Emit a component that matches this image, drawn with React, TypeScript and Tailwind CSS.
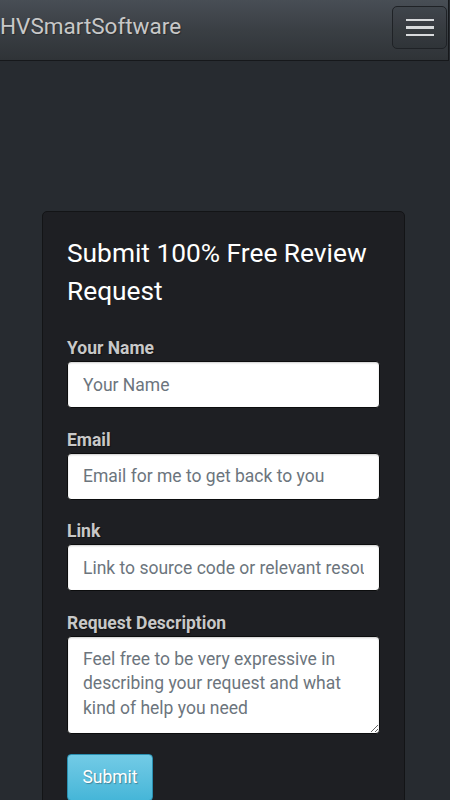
import * as React from "react";

const fields = [
  { label: "Your Name", placeholder: "Your Name" },
  { label: "Email", placeholder: "Email for me to get back to you" },
  { label: "Link", placeholder: "Link to source code or relevant resources" },
];

export default function App() {
  return (
    <div className="min-h-[800px] bg-[#272b30] font-['Roboto',sans-serif] overflow-hidden">
      {/* Navbar */}
      <nav className="w-[449px] h-[61px] flex items-start justify-between border-r border-b border-[#16181b] bg-gradient-to-b from-[#484e55] via-[#3a3f44] to-[#2f3337]">
        <a className="mt-[11px] text-[22.5px] leading-[30px] text-[#c8c8c8] [text-shadow:1px_1px_1px_rgba(0,0,0,0.3)]">
          HVSmartSoftware
        </a>
        <button className="mt-[6px] mr-[1px] w-[55px] h-[43px] rounded-[5px] border border-[#1f2226] bg-[#00000010] flex flex-col items-center justify-center gap-[5px]">
          <span className="block w-[28px] h-[2.5px] bg-[#d8dadc]" />
          <span className="block w-[28px] h-[2.5px] bg-[#d8dadc]" />
          <span className="block w-[28px] h-[2.5px] bg-[#d8dadc]" />
        </button>
      </nav>

      {/* Card */}
      <div className="ml-[42px] mt-[150px] w-[363px] rounded-[5px] border border-[#131416] bg-[#1e1f23] px-[24px] pt-[22px] pb-[30px]">
        <h3 className="text-[26.3px] leading-[38px] text-white font-normal">
          Submit 100% Free Review Request
        </h3>
        <form className="mt-[26px]" onSubmit={e => e.preventDefault()}>
          {fields.map(f => (
            <div key={f.label} className="mb-[19.5px]">
              <label className="block mb-[1px] text-[17.5px] leading-[24px] font-bold text-[#c8c8c8] [text-shadow:1px_1px_1px_rgba(0,0,0,0.4)]">
                {f.label}
              </label>
              <input
                placeholder={f.placeholder}
                className="block w-full h-[47px] rounded-[4px] bg-white px-[15px] text-[17.5px] text-[#495057] placeholder:text-[#6c757d] border border-[#0c0d0e] shadow-[inset_0_1px_2px_rgba(0,0,0,0.2)] outline-none"
              />
            </div>
          ))}
          <div className="mb-[20px]">
            <label className="block mb-[1px] text-[17.5px] leading-[24px] font-bold text-[#c8c8c8] [text-shadow:1px_1px_1px_rgba(0,0,0,0.4)]">
              Request Description
            </label>
            <textarea
              rows={3}
              placeholder="Feel free to be very expressive in describing your request and what kind of help you need"
              className="block w-full h-[98px] rounded-[4px] bg-white px-[15px] py-[10px] text-[17.5px] leading-[24.5px] text-[#495057] placeholder:text-[#6c757d] border border-[#0c0d0e] shadow-[inset_0_1px_2px_rgba(0,0,0,0.2)] outline-none"
            />
          </div>
          <button
            type="submit"
            className="h-[47px] w-[86px] rounded-[4px] border border-[#2a8fb0] bg-gradient-to-b from-[#72cbe6] to-[#45b6d8] text-[17.5px] text-white [text-shadow:1px_1px_1px_rgba(0,0,0,0.3)]"
          >
            Submit
          </button>
        </form>
      </div>
    </div>
  );
}
